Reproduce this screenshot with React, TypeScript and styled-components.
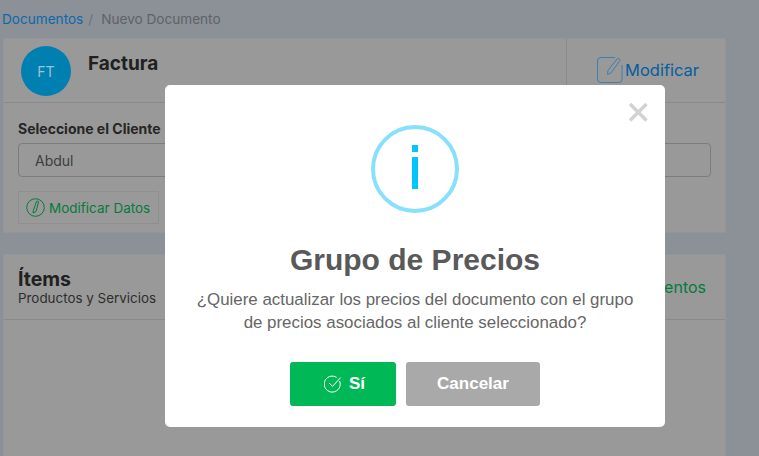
import React from "react";
import styled, { createGlobalStyle } from "styled-components";

const Global = createGlobalStyle`
  html, body { margin: 0; padding: 0; height: 456px; overflow: hidden; background: #8c9097; }
  body { font-family: Inter, "Liberation Sans", sans-serif; }
  * { box-sizing: border-box; }
`;

const Page = styled.div`
  width: 759px;
  height: 456px;
  overflow: hidden;
  padding: 0 33px 0 3px;
`;
const Breadcrumb = styled.nav`
  display: flex;
  align-items: center;
  height: 38px;
  margin-left: -1px;
  font-size: 13.6px;
  color: #5f6268;
`;
const Crumb = styled.span`color: #0b69ad;`;
const Sep = styled.span`margin: 0 8px 0 5px; color: #6f7278;`;
const Card = styled.section`
  background: #999;
  border: 1px solid #92959a;
  margin-bottom: 21px;
`;
const HeaderRow = styled.div`
  display: flex;
  height: 64px;
  border-bottom: 1px solid #8a8a8a;
`;
const HeaderMain = styled.div`
  flex: 1;
  display: flex;
  gap: 17px;
  padding: 7px 0 0 17px;
`;
const Avatar = styled.div`
  width: 50px;
  height: 50px;
  border-radius: 50%;
  background: #007fb1;
  color: #9cc4d4;
  font-size: 14px;
  display: flex;
  align-items: center;
  justify-content: center;
`;
const Title = styled.h2`
  margin: 6px 0 0;
  font-size: 19px;
  line-height: 24px;
  font-weight: 700;
  color: #202020;
`;
const HeaderAction = styled.div`
  width: 159px;
  border-left: 1px solid #8a8a8a;
  display: flex;
  align-items: center;
  padding: 0 0 2px 30px;
  gap: 2px;
  color: #055e9e;
  font-size: 16.5px;
`;
const CardBody = styled.div`
  padding: 18px 14px 8px 14px;
`;
const Label = styled.div`
  font-size: 14px;
  line-height: 15px;
  font-weight: 700;
  color: #262626;
  margin-bottom: 7px;
`;
const SelectBox = styled.div`
  height: 34px;
  border: 1px solid #7c7c7c;
  border-radius: 4px;
  padding-left: 16px;
  display: flex;
  align-items: center;
  font-size: 14px;
  color: #3d3d3d;
  margin-bottom: 14px;
`;
const GhostButton = styled.div`
  display: inline-flex;
  align-items: center;
  gap: 4px;
  width: 141px;
  height: 33px;
  padding-left: 7px;
  border: 1px solid #8f8f8f;
  color: #057a3c;
  font-size: 13.5px;
`;
const ItemsHeader = styled.div`
  height: 65px;
  border-bottom: 1px solid #8a8a8a;
  padding: 12px 19px 0 14px;
  display: flex;
  justify-content: space-between;
  align-items: center;
`;
const ItemsTitle = styled.div`
  margin-top: -12px;
  font-size: 19.5px;
  line-height: 20px;
  font-weight: 700;
  color: #202020;
`;
const ItemsSub = styled.div`
  margin-top: 1px;
  font-size: 13.4px;
  line-height: 16px;
  font-weight: 400;
  color: #2e2e2e;
`;
const ItemsAction = styled.div`
  margin-top: -12px;
  color: #057a3c;
  font-size: 16px;
`;
const ItemsBody = styled.div`height: 200px;`;

const Overlay = styled.div`
  position: fixed;
  inset: 0;
  padding: 85px 0 0 165px;
`;
const Modal = styled.div`
  position: relative;
  width: 500px;
  height: 342px;
  background: #fff;
  border-radius: 5px;
  padding-top: 40px;
  display: flex;
  flex-direction: column;
  align-items: center;
  font-family: "Liberation Sans", Arial, sans-serif;
`;
const CloseButton = styled.div`
  position: absolute;
  top: 16px;
  right: 16px;
  width: 22px;
  height: 22px;
  display: flex;
`;
const InfoRing = styled.div`
  width: 88px;
  height: 88px;
  border: 4px solid #87e0fc;
  border-radius: 50%;
  display: flex;
  flex-direction: column;
  align-items: center;
  padding-top: 16px;
  gap: 5px;
`;
const InfoDot = styled.span`
  width: 6px;
  height: 7px;
  background: #00c6fb;
`;
const InfoStem = styled.span`
  width: 6px;
  height: 32px;
  background: #00c6fb;
`;
const ModalTitle = styled.h1`
  margin: 30px 0 0;
  font-size: 30px;
  line-height: 34px;
  font-weight: 700;
  color: #595959;
`;
const ModalText = styled.p`
  margin: 11px 0 0;
  width: 445px;
  text-align: center;
  font-size: 16.9px;
  line-height: 23px;
  color: #666;
`;
const Actions = styled.div`
  display: flex;
  gap: 10px;
  margin-top: 28px;
`;
const ModalButton = styled.button<{ $bg: string; $w: number; $pl?: number }>`
  width: ${(p) => p.$w}px;
  height: 44px;
  border: 0;
  border-radius: 3px;
  background: ${(p) => p.$bg};
  color: #fff;
  font-family: inherit;
  font-size: 17px;
  font-weight: 700;
  display: flex;
  align-items: center;
  justify-content: center;
  gap: 7px;
  padding: 0 0 0 ${(p) => p.$pl ?? 0}px;
`;

const PencilSquare = () => (
  <svg width="26" height="26" viewBox="0 0 26 26" fill="none" stroke="#3e7fae" strokeWidth="1">
    <path d="M18 .5H4A3.5 3.5 0 0 0 .5 4v18A3.5 3.5 0 0 0 4 25.5h18a3 3 0 0 0 3-3V8" />
    <path d="M10.5 17.5l.5-4L20 2c1-1 3.2-.2 3 1.5L14 16z" />
  </svg>
);
const PencilCircle = () => (
  <svg width="19" height="19" viewBox="0 0 19 19" fill="none" stroke="#057a3c" strokeWidth="1">
    <circle cx="9.5" cy="9.5" r="8.8" />
    <path d="M7 15l.3-2.5L10.5 3.5c.5-.9 2.2-.5 2 .6L10 13.5z" />
  </svg>
);
const CheckCircle = () => (
  <svg width="18" height="18" viewBox="0 0 18 18" fill="none" stroke="#fff" strokeWidth="1">
    <path d="M15.6 6a8 8 0 1 1-3-3.6" />
    <path d="M5.2 8l3.3 3.4L16.6 2.6" />
  </svg>
);
const CloseIcon = () => (
  <svg width="22" height="22" viewBox="0 0 22 22" fill="none" stroke="#d2d2d2" strokeWidth="3.4">
    <path d="M3 3l16.5 16.5M19.5 3L3 19.5" />
  </svg>
);

export default function App() {
  return (
    <>
      <Global />
      <Page>
        <Breadcrumb>
          <Crumb>Documentos</Crumb>
          <Sep>/</Sep>
          <span>Nuevo Documento</span>
        </Breadcrumb>
        <Card>
          <HeaderRow>
            <HeaderMain>
              <Avatar>FT</Avatar>
              <Title>Factura</Title>
            </HeaderMain>
            <HeaderAction>
              <PencilSquare />
              Modificar
            </HeaderAction>
          </HeaderRow>
          <CardBody>
            <Label>Seleccione el Cliente</Label>
            <SelectBox>Abdul</SelectBox>
            <GhostButton>
              <PencilCircle />
              Modificar Datos
            </GhostButton>
          </CardBody>
        </Card>
        <Card>
          <ItemsHeader>
            <ItemsTitle>
              Ítems
              <ItemsSub>Productos y Servicios</ItemsSub>
            </ItemsTitle>
            <ItemsAction>Agregar Documentos</ItemsAction>
          </ItemsHeader>
          <ItemsBody />
        </Card>
      </Page>
      <Overlay>
        <Modal>
          <CloseButton>
            <CloseIcon />
          </CloseButton>
          <InfoRing>
            <InfoDot />
            <InfoStem />
          </InfoRing>
          <ModalTitle>Grupo de Precios</ModalTitle>
          <ModalText>
            ¿Quiere actualizar los precios del documento con el grupo de precios asociados al cliente seleccionado?
          </ModalText>
          <Actions>
            <ModalButton $bg="#00b956" $w={106} $pl={3}>
              <CheckCircle />
              Sí
            </ModalButton>
            <ModalButton $bg="#a9a9a9" $w={134}>
              Cancelar
            </ModalButton>
          </Actions>
        </Modal>
      </Overlay>
    </>
  );
}
